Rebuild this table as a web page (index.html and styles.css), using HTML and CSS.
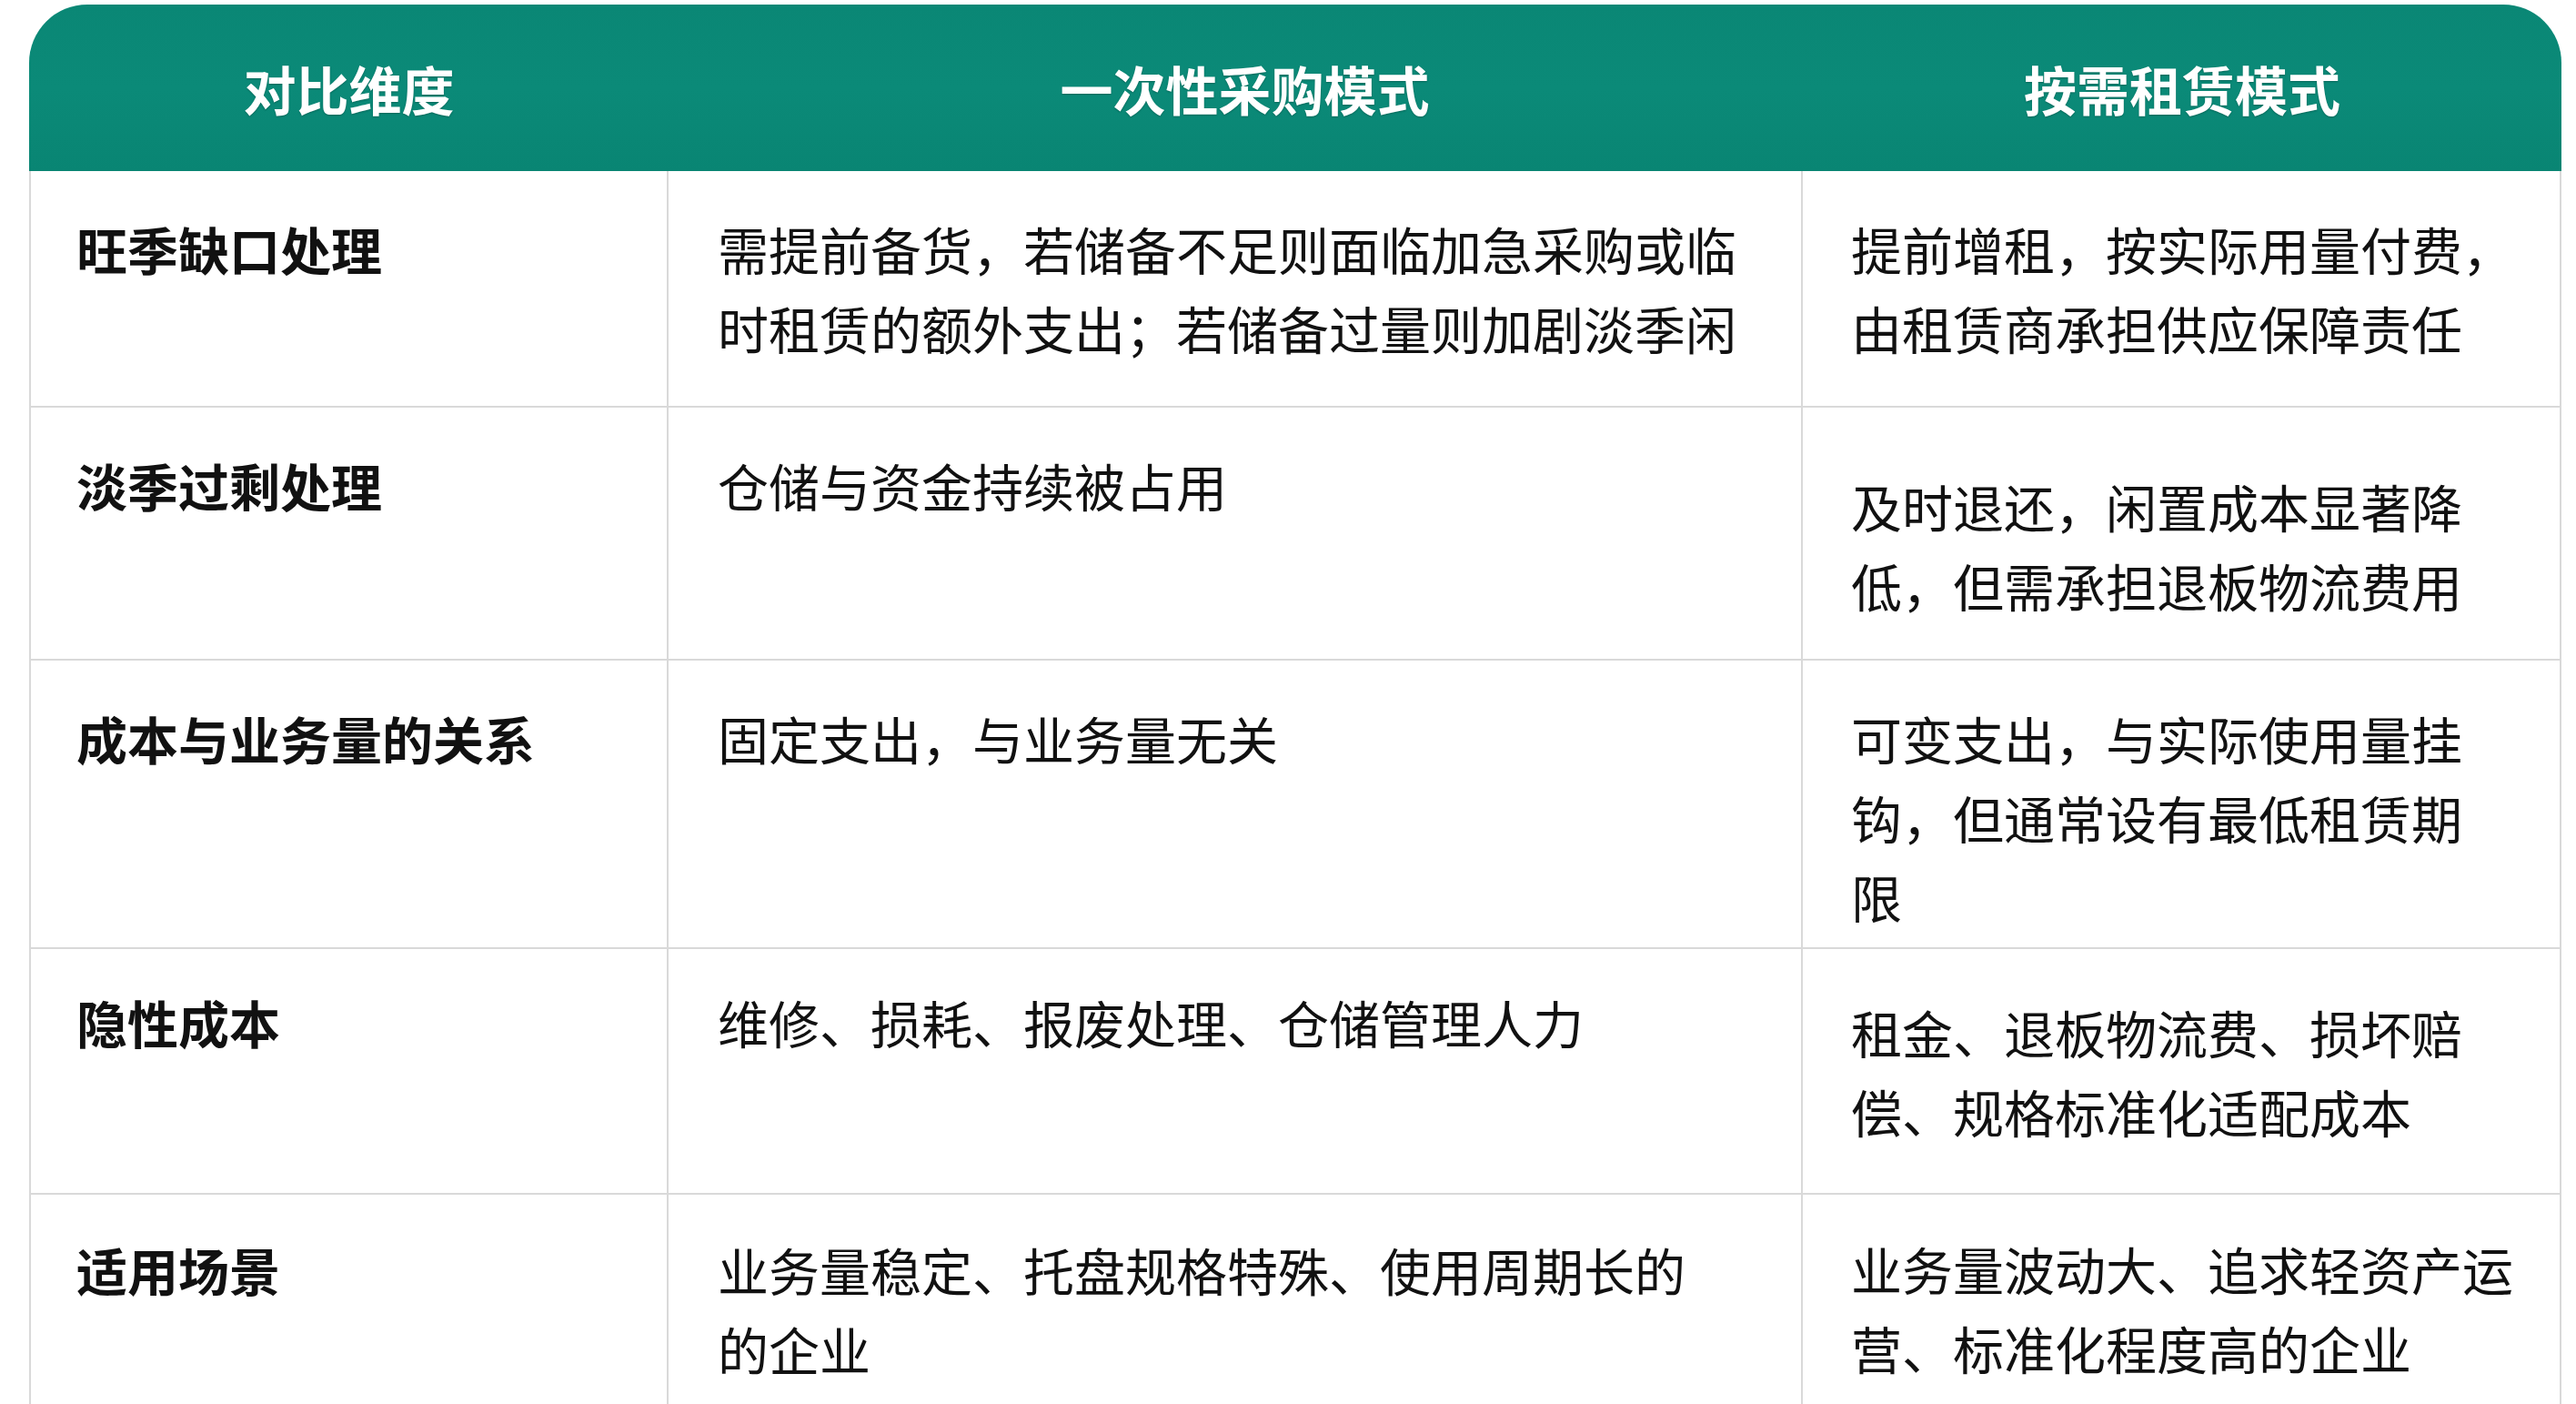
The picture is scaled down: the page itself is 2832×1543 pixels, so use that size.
FILE: index.html
```html
<!DOCTYPE html>
<html lang="zh-CN">
<head>
<meta charset="utf-8">
<title>对比维度</title>
<link rel="stylesheet" href="styles.css">
</head>
<body>
<div class="table">
  <div class="head">
    <div class="head-cell">对比维度</div>
    <div class="head-cell">一次性采购模式</div>
    <div class="head-cell">按需租赁模式</div>
  </div>
  <div class="body">
    <div class="cell c1">旺季缺口处理</div>
    <div class="cell c2">需提前备货，若储备不足则面临加急采购或临<br>时租赁的额外支出；若储备过量则加剧淡季闲</div>
    <div class="cell c3">提前增租，按实际用量付费，<br>由租赁商承担供应保障责任</div>

    <div class="cell c1">淡季过剩处理</div>
    <div class="cell c2">仓储与资金持续被占用</div>
    <div class="cell c3 low">及时退还，闲置成本显著降<br>低，但需承担退板物流费用</div>

    <div class="cell c1">成本与业务量的关系</div>
    <div class="cell c2">固定支出，与业务量无关</div>
    <div class="cell c3">可变支出，与实际使用量挂<br>钩，但通常设有最低租赁期<br>限</div>

    <div class="cell c1 r4">隐性成本</div>
    <div class="cell c2 r4">维修、损耗、报废处理、仓储管理人力</div>
    <div class="cell c3 r4b">租金、退板物流费、损坏赔<br>偿、规格标准化适配成本</div>

    <div class="cell c1 r5">适用场景</div>
    <div class="cell c2 r5">业务量稳定、托盘规格特殊、使用周期长的<br>的企业</div>
    <div class="cell c3 r5b">业务量波动大、追求轻资产运<br>营、标准化程度高的企业</div>
  </div>
</div>
</body>
</html>
```

FILE: styles.css
```css
html, body {
  margin: 0;
  padding: 0;
  overflow: hidden;
  background: #ffffff;
}

body {
  font-family: "Noto Sans CJK SC", "Noto Sans", sans-serif;
  color: #111111;
}

.table {
  margin: 5px 0 0 32px;
  width: 2784px;
}

.head {
  display: grid;
  grid-template-columns: 703px 1247px 834px;
  height: 183px;
  background: linear-gradient(180deg, #0a8775 0%, #0b8a78 50%, #098573 100%);
  border-radius: 64px 64px 0 0;
  align-items: center;
}

.head-cell {
  text-align: center;
  color: #ffffff;
  font-size: 58px;
  font-weight: 700;
  line-height: 1;
  padding-top: 0;
  text-shadow: 0 1px 2px rgba(0, 0, 0, 0.25);
}

.head-cell:nth-child(2) {
  padding-left: 20px;
}

.body {
  display: grid;
  grid-template-columns: 701px 1247px 834px;
  grid-template-rows: 260px 278px 317px 270px 320px;
  border-left: 2px solid #d9d9d9;
}

.cell {
  border-right: 2px solid #d9d9d9;
  border-bottom: 2px solid #d9d9d9;
  padding-top: 41px;
  font-size: 56px;
  line-height: 87px;
  white-space: nowrap;
  overflow: hidden;
}

.c1 {
  padding-left: 50px;
  font-weight: 700;
}

.c2 {
  padding-left: 54px;
}

.c3 {
  padding-left: 53px;
}

.low {
  padding-top: 64px;
}

.r4 {
  padding-top: 36px;
}

.r4b {
  padding-top: 47px;
}

.r5 {
  padding-top: 38px;
}

.r5b {
  padding-top: 37px;
}
```
